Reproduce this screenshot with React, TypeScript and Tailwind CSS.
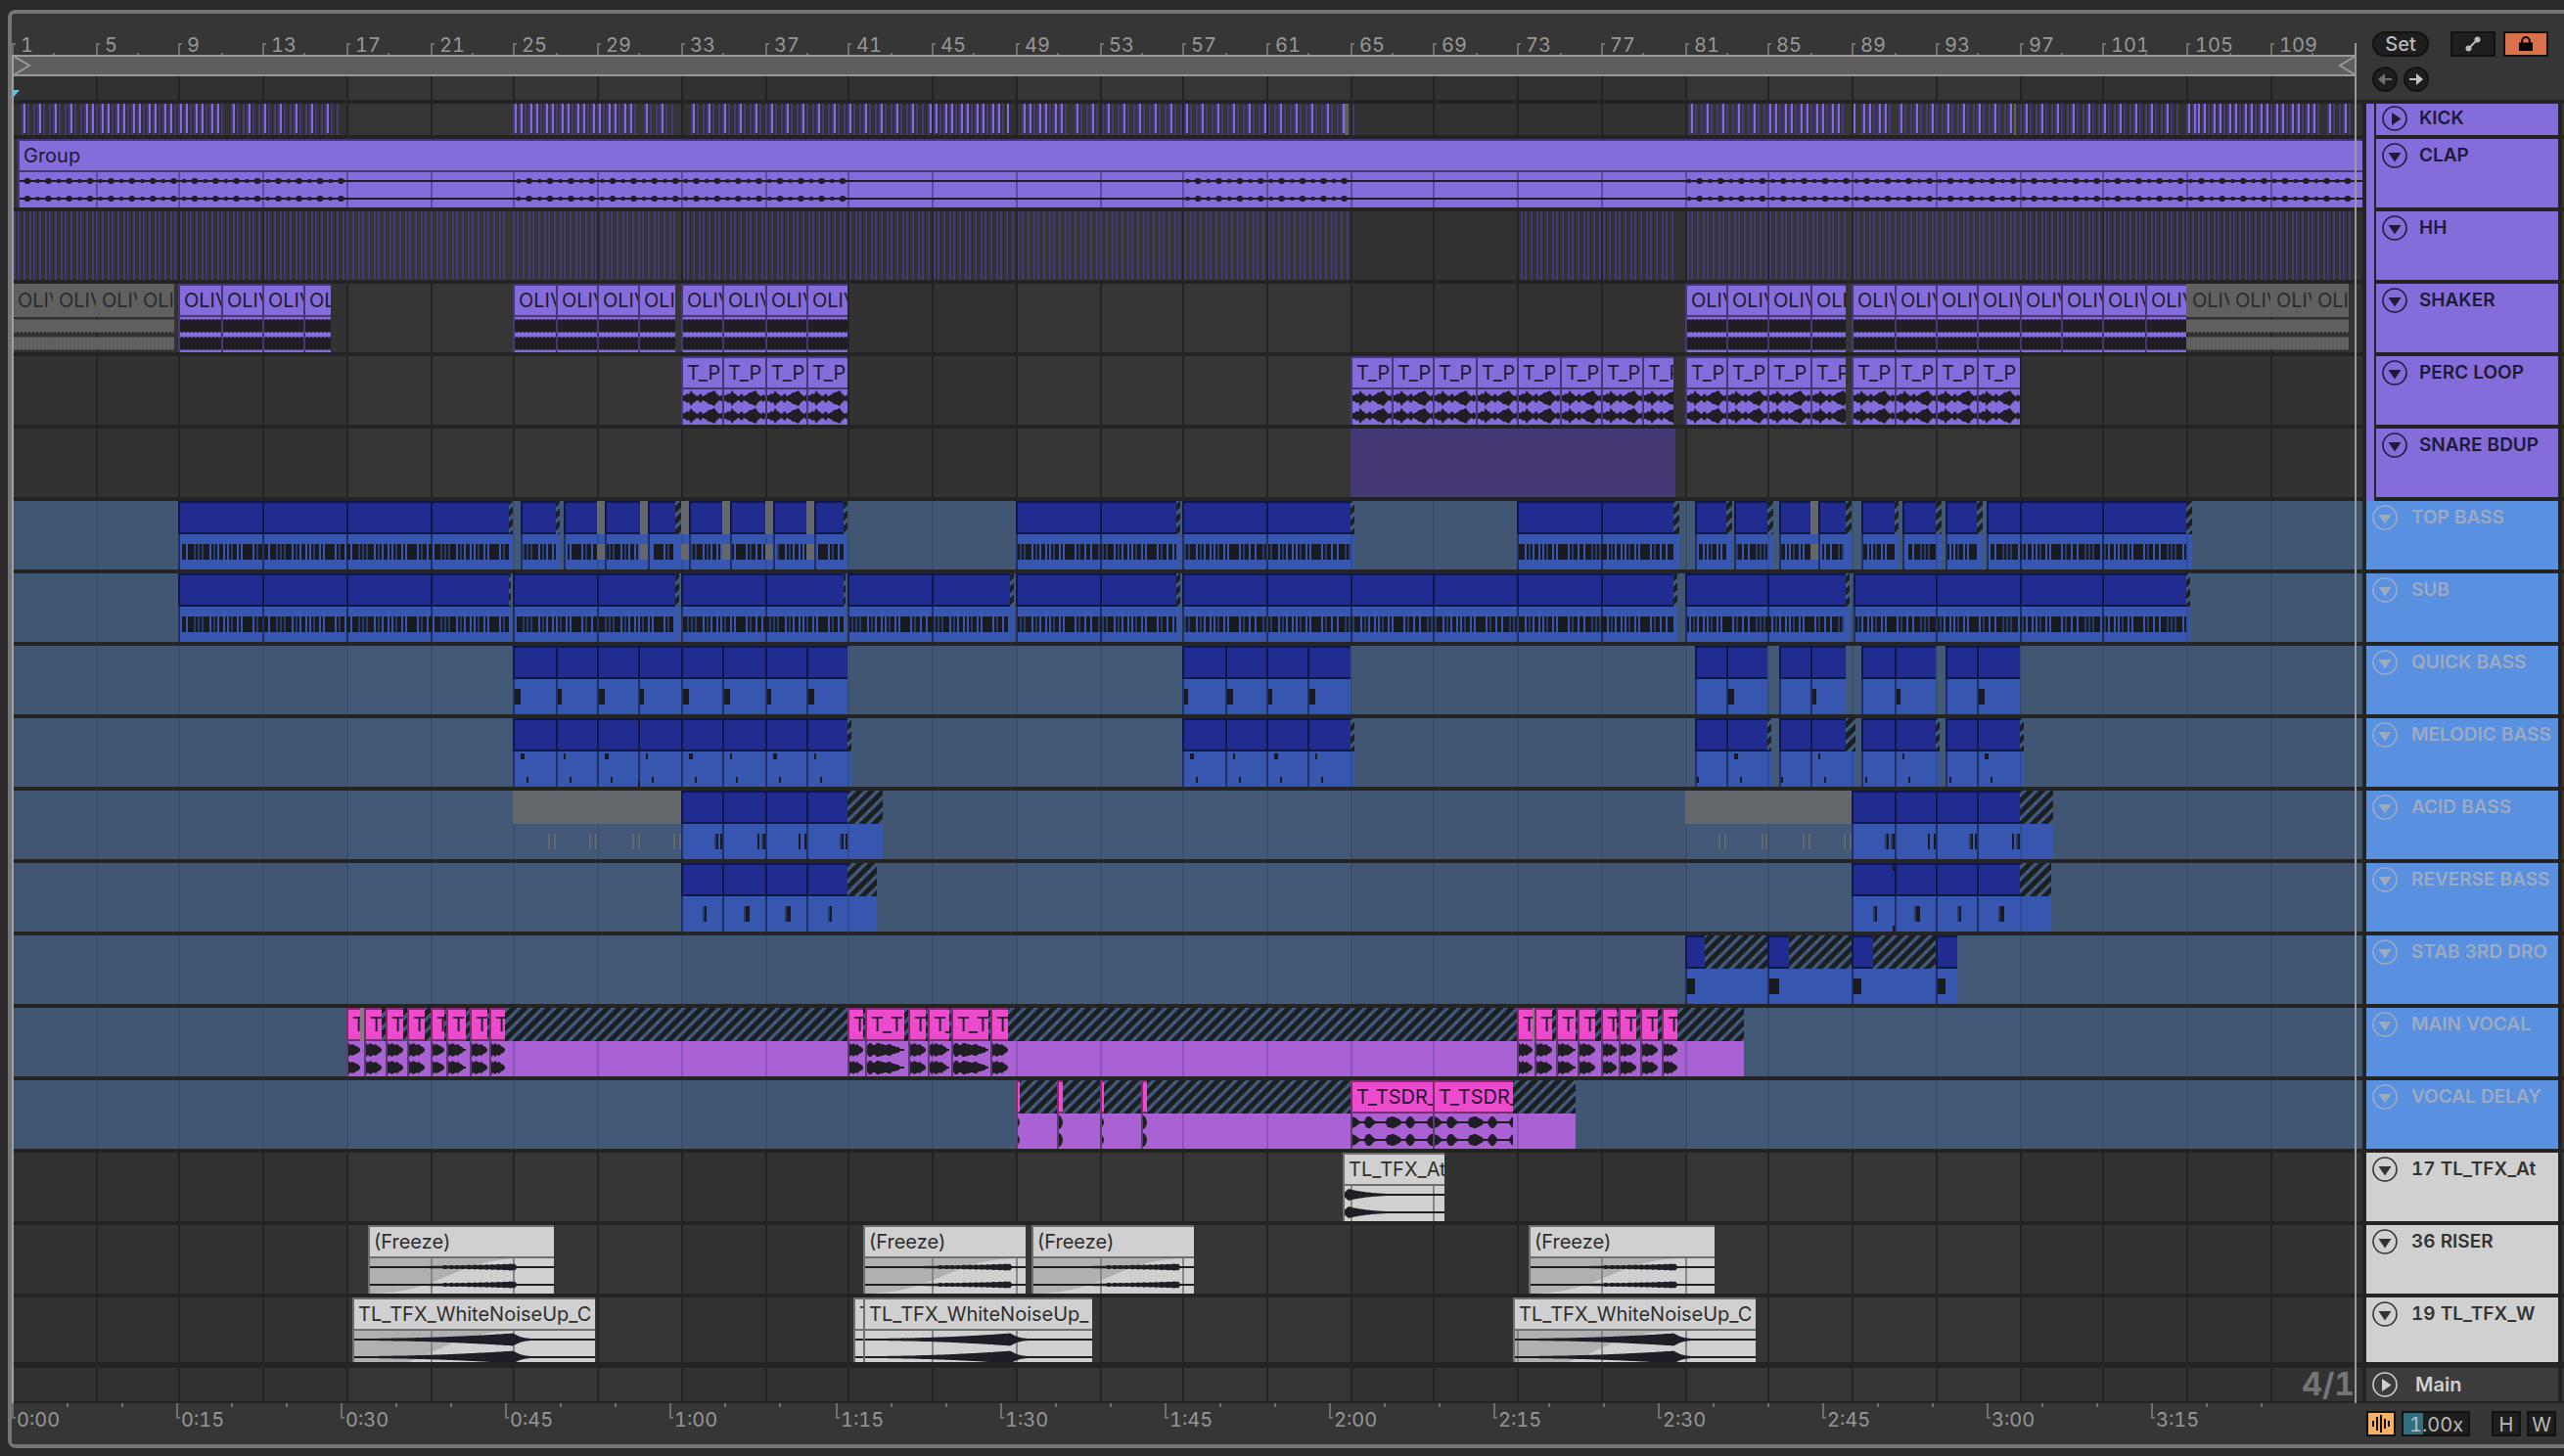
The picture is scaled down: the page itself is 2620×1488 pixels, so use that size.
import { clsx } from 'clsx';

type Theme = 'purple' | 'blue' | 'vocal' | 'white' | 'off';
type WaveKind = 'clap' | 'shaker' | 'perc' | 'vocal' | 'delay' | 'riser' | 'noise' | 'tail';

interface Clip {
  from: number;
  to: number;
  label?: string;
  off?: boolean;
  wave?: WaveKind;
  peak?: number;
}

// x, y, width, height of a note inside the lane
type Note = [number, number, number, number];

interface Track {
  name: string;
  theme: Theme;
  group?: boolean;
  folded?: boolean;
  short?: boolean;
  parts?: [number, number][];
  clips?: Clip[];
  notes?: Note[];
  dimNotes?: Note[];
  offNotes?: Note[];
  stripes?: 'kick' | 'hh';
  block?: [number, number];
}

const BAR_GROUPS = Array.from({ length: 28 }, (_, i) => 1 + i * 4);

// timeline position of a bar
const px = (bar: number) => 2 * Math.ceil(5.4 + (42.74 * (bar - 1)) / 4);

// n two-bar clips starting at a bar, the last one can be cut earlier
const pairs = (bar: number, n: number, end?: number, extra: Partial<Clip> = {}): Clip[] =>
  Array.from({ length: n }, (_, k) => ({
    from: px(bar + k * 2),
    to: k === n - 1 && end ? end : px(bar + k * 2 + 2),
    ...extra,
  }));

const list = (...edges: [number, number][]): Clip[] => edges.map(([from, to]) => ({ from, to }));
const off = (...edges: [number, number][]): Clip[] => edges.map(([from, to]) => ({ from, to, off: true }));

/* ---------- kick and hi-hat stripes ---------- */

const seq = (from: number, to: number, step: number) => {
  const out: number[] = [];
  for (let x = from; x <= to; x += step) out.push(Math.round(x / 2) * 2);
  return out;
};

const KICK_SINGLE = [
  ...seq(24, 74, 16.1),
  ...seq(238, 336, 16),
  ...seq(660, 678, 16),
  ...seq(708, 934, 16.04),
  ...seq(1099, 1196, 16),
  ...seq(1211, 1372, 16),
  ...seq(1728, 1793, 16),
  ...seq(1942, 2214, 16),
  ...seq(2380, 2396, 16),
];
const KICK_DOUBLE = [
  ...seq(88, 170, 16),
  ...seq(184, 218, 16),
  ...seq(526, 646, 16),
  ...seq(949, 1014, 16),
  ...seq(1045, 1078, 16),
  ...seq(1808, 1872, 16),
  1904,
  1920,
  2236,
  ...seq(2246, 2358, 16),
];
const KICK_BRIGHT = [...KICK_SINGLE, ...KICK_DOUBLE.flatMap((x) => [x, x + 6]), 1029, 1894];
const KICK_DARK = [...KICK_SINGLE, ...KICK_DOUBLE].flatMap((x) => [x - 2, x + 4, x + 10]);

const HH_RANGES = [
  [14, 518],
  [524, 690],
  [698, 1034],
  [1040, 1378],
  [1554, 1710],
  [1724, 1884],
  [1894, 2400],
];
const HH_LINES = HH_RANGES.flatMap(([a, b]) =>
  seq(a, b, 16)
    .flatMap((x) => [x, x + 4, x + 10])
    .filter((x) => x <= b),
);

const bars = (xs: number[], y: number, h: number) => xs.map((x) => `M${x} ${y}h2v${h}h-2z`).join('');

/* ---------- midi notes ---------- */

const BASS_PATTERN = '###.#d##.##.###d#d#d###.#d#.##.#.#d##.#.##';

const bassNotes = (ranges: [number, number][], mark: string): Note[] =>
  ranges.flatMap(([a, b]) => {
    const out: Note[] = [];
    for (let x = a + 2; x < b; x += 2) {
      if (BASS_PATTERN[(x / 2) % BASS_PATTERN.length] === mark) out.push([x, 44, 2, 16]);
    }
    return out;
  });

const notePath = (notes: Note[]) => notes.map(([x, y, w, h]) => `M${x} ${y}h${w}v${h}h${-w}z`).join('');

/* ---------- waveforms ---------- */

const PERC = [2, 3, 3, 5, 4, 8, 5, 4, 2, 3, 5, 2, 3, 4, 6, 6, 7, 8, 5, 3, 2, 4];
const VOCAL = [4, 7, 5, 7, 6, 5, 6, 4, 3, 1];
const DELAY = [6, 6, 5, 4, 2, 1, 1, 1, 5, 6, 6, 4, 2, 1, 1, 1, 1, 1, 1, 5, 5, 6, 6, 5, 4, 3, 1, 1, 1, 4, 6, 6, 4, 1, 1, 1, 1, 1, 1, 1, 4, 6];

const clapActive = (x: number) =>
  (x > 22 && x < 352) || (x > 524 && x < 866) || (x > 1208 && x < 1380) || (x > 1722 && x < 2406);

function amplitude(kind: WaveKind, x: number, width: number, start: number, peak: number) {
  switch (kind) {
    case 'clap': {
      const gx = x + start;
      if (!clapActive(gx)) return 1;
      const n = Math.round((gx - 28) / 10.68);
      const d = Math.abs(gx - 28 - n * 10.68);
      const r = n % 2 === 0 ? 3.4 : 2.4;
      return d < r ? Math.max(1, Math.sqrt(r * r - d * d) * 0.9) : 1;
    }
    case 'shaker':
      return x % 4 < 2 ? 7 : 6;
    case 'perc':
      return PERC[Math.floor(x / 2) % PERC.length];
    case 'vocal':
      return VOCAL[Math.min(VOCAL.length - 1, Math.floor((x / width) * VOCAL.length))];
    case 'delay':
      return DELAY[Math.floor(x / 2) % DELAY.length];
    case 'riser':
      return x < peak ? 1 + 2 * Math.pow(x / peak, 3) + (x > peak * 0.5 && x % 6 < 3 ? 0.6 : 0) : 1;
    case 'noise':
      return x < peak ? 1 + 5.5 * Math.pow(x / peak, 2) : Math.max(1, 5.5 * Math.exp((peak - x) / 9));
    default:
      return x < 6 ? 1 + x * 0.8 : Math.max(1, 6 * Math.exp((6 - x) / 22));
  }
}

function wavePath({ wave, from, to, peak = 151 }: Clip, mid: number) {
  const width = to - from;
  const step = wave === 'clap' ? 1 : 2;
  const top: string[] = [];
  const bottom: string[] = [];
  for (let x = 0; x <= width; x += step) {
    const a = amplitude(wave!, x, width, from, peak);
    top.push(`${x} ${(mid - a).toFixed(1)}`);
    bottom.unshift(`${x} ${(mid + a).toFixed(1)}`);
  }
  return `M${top.join('L')}L${bottom.join('L')}Z`;
}

/* ---------- arrangement ---------- */

const OLIV = { label: 'OLIV', wave: 'shaker' as const };
const PERC_CLIP = { label: 'T_P', wave: 'perc' as const };

const vocalLabel = (width: number) => (width > 30 ? 'T_T' : width > 20 ? 'T_' : width > 8 ? 'T' : undefined);
const vocal = (...edges: [number, number][]): Clip[] =>
  edges.map(([from, to]) => ({ from, to, label: vocalLabel(to - from), wave: 'vocal' }));

const QUICK_RIGHT: [number, number][] = [
  [1732, 1764],
  [1764, 1806],
  [1818, 1850],
  [1850, 1886],
  [1902, 1936],
  [1936, 1978],
  [1988, 2020],
  [2020, 2064],
];

const TOP_PARTS: [number, number][] = [
  [182, 524],
  [532, 572],
  [576, 866],
  [1038, 1206],
  [1208, 1384],
  [1550, 1716],
  [1732, 1770],
  [1772, 1812],
  [1818, 1892],
  [1902, 1940],
  [1944, 1984],
  [1988, 2026],
  [2030, 2240],
];

const TOP_NOTES: [number, number][] = [
  [182, 520],
  [532, 568],
  [578, 610],
  [618, 654],
  [664, 688],
  [704, 738],
  [746, 782],
  [792, 824],
  [832, 862],
  [1038, 1202],
  [1208, 1380],
  [1550, 1710],
  [1732, 1764],
  [1772, 1806],
  [1818, 1850],
  [1860, 1884],
  [1902, 1936],
  [1946, 1978],
  [1988, 2020],
  [2032, 2234],
];

const SUB_NOTES: [number, number][] = [
  [182, 520],
  [524, 688],
  [696, 862],
  [866, 1030],
  [1038, 1202],
  [1208, 1710],
  [1722, 1884],
  [1894, 2234],
];

const tracks: Track[] = [
  { name: 'KICK', theme: 'purple', group: true, folded: true, stripes: 'kick' },
  {
    name: 'CLAP',
    theme: 'purple',
    group: true,
    clips: [{ from: 18, to: 2440, label: 'Group', wave: 'clap' }],
  },
  { name: 'HH', theme: 'purple', group: true, stripes: 'hh' },
  {
    name: 'SHAKER',
    theme: 'purple',
    group: true,
    clips: [
      ...pairs(1, 4, 178, { ...OLIV, off: true }),
      ...pairs(9, 4, 338, OLIV),
      ...pairs(25, 4, 690, OLIV),
      ...pairs(33, 4, 866, OLIV),
      ...pairs(81, 4, 1886, OLIV),
      ...pairs(89, 8, 2234, OLIV),
      ...pairs(105, 4, 2400, { ...OLIV, off: true }),
    ],
  },
  {
    name: 'PERC LOOP',
    theme: 'purple',
    group: true,
    clips: [
      ...pairs(33, 4, 866, PERC_CLIP),
      ...pairs(65, 8, 1710, PERC_CLIP),
      ...pairs(81, 4, 1886, PERC_CLIP),
      ...pairs(89, 4, 2064, PERC_CLIP),
    ],
  },
  { name: 'SNARE BDUP', theme: 'purple', group: true, block: [1380, 1712] },
  {
    name: 'TOP BASS',
    theme: 'blue',
    parts: TOP_PARTS,
    clips: [
      ...list([182, 268], [268, 354], [354, 440], [440, 520], [532, 568], [576, 610], [618, 654], [662, 690]),
      ...list([704, 738], [746, 782], [790, 824], [832, 862], [1038, 1124], [1124, 1202], [1208, 1294], [1294, 1380]),
      ...list([1550, 1636], [1636, 1710], [1732, 1764], [1772, 1806], [1818, 1850], [1858, 1886], [1902, 1936]),
      ...list([1944, 1978], [1988, 2020], [2030, 2064], [2064, 2148], [2148, 2234]),
      ...off([610, 618], [654, 662], [696, 704], [738, 746], [782, 790], [824, 832], [1850, 1858]),
    ],
    notes: bassNotes(TOP_NOTES, '#'),
    dimNotes: bassNotes(TOP_NOTES, 'd'),
    offNotes: [610, 654, 696, 738, 782, 824, 1850].map((x) => [x, 44, 8, 16]),
  },
  {
    name: 'SUB',
    theme: 'blue',
    parts: [
      [182, 522],
      [524, 694],
      [696, 864],
      [866, 1036],
      [1038, 1206],
      [1208, 1714],
      [1722, 1890],
      [1894, 2238],
    ],
    clips: [
      ...list([182, 268], [268, 354], [354, 440], [440, 520], [524, 610], [610, 690], [696, 782], [782, 862]),
      ...list([866, 952], [952, 1032], [1038, 1124], [1124, 1202], [1208, 1294], [1294, 1380], [1380, 1464]),
      ...list([1464, 1550], [1550, 1636], [1636, 1710], [1722, 1806], [1806, 1886], [1894, 1978], [1978, 2064]),
      ...list([2064, 2148], [2148, 2234]),
    ],
    notes: bassNotes(SUB_NOTES, '#'),
    dimNotes: bassNotes(SUB_NOTES, 'd'),
  },
  {
    name: 'QUICK BASS',
    theme: 'blue',
    parts: [
      [524, 866],
      [1208, 1380],
      [1732, 1806],
      [1818, 1886],
      [1902, 1978],
      [1988, 2064],
    ],
    clips: [...pairs(25, 8), ...pairs(57, 4), ...list(...QUICK_RIGHT)],
    notes: [
      ...pairs(25, 8).map((c, i): Note => [c.from + 2, 44, [6, 4, 6, 4, 6, 6, 4, 6][i], 16]),
      ...pairs(57, 4).map((c, i): Note => [c.from + 2, 44, [4, 6, 4, 6][i], 16]),
      [1766, 44, 6, 16],
      [1852, 44, 4, 16],
      [1938, 44, 4, 16],
      [2022, 44, 6, 16],
    ],
  },
  {
    name: 'MELODIC BASS',
    theme: 'blue',
    parts: [
      [524, 870],
      [1208, 1384],
      [1732, 1810],
      [1818, 1896],
      [1902, 1982],
      [1988, 2068],
    ],
    clips: [...pairs(25, 8), ...pairs(57, 4), ...list(...QUICK_RIGHT)],
    notes: [
      ...[...pairs(25, 8), ...pairs(57, 4)].flatMap((c, i): Note[] => [
        [c.from + 8, 36, i % 2 ? 2 : 4, 6],
        [c.from + 14, 60, 2, 6],
      ]),
      ...[1764, 1850, 1936, 2020].flatMap((x): Note[] => [
        [x + 8, 36, x === 1764 || x === 2020 ? 4 : 2, 6],
        [x + 14, 60, 2, 6],
      ]),
      ...[1734, 1820, 1906, 1992].map((x): Note => [x, 60, 2, 6]),
      [652, 2, 2, 6],
      [652, 64, 2, 6],
    ],
  },
  {
    name: 'ACID BASS',
    theme: 'blue',
    parts: [
      [696, 902],
      [1892, 2098],
    ],
    clips: [
      { from: 524, to: 696, off: true },
      ...pairs(33, 4),
      { from: 1722, to: 1892, off: true },
      ...pairs(89, 4),
    ],
    notes: [732, 736, 774, 780, 816, 822, 860, 864, 1928, 1934, 1970, 1976, 2014, 2018, 2056, 2062].map(
      (x) => [x, 44, 2, 16],
    ),
    dimNotes: [730, 778, 858, 1926, 1932, 2012, 2060].map((x) => [x, 44, 2, 16]),
    offNotes: [560, 566, 602, 608, 646, 652, 688, 694, 1756, 1762, 1800, 1804, 1842, 1848, 1884, 1890].map(
      (x) => [x, 44, 2, 16],
    ),
  },
  {
    name: 'REVERSE BASS',
    theme: 'blue',
    parts: [
      [696, 896],
      [1892, 2096],
    ],
    clips: [...pairs(33, 4), ...pairs(89, 4)],
    notes: [
      [720, 44, 2, 16],
      [762, 44, 4, 16],
      [804, 44, 4, 16],
      [848, 44, 2, 16],
      [1916, 44, 2, 16],
      [1958, 44, 4, 16],
      [2002, 44, 2, 16],
      [2044, 44, 4, 16],
      [1934, 2, 2, 6],
      [1934, 64, 2, 6],
    ],
    dimNotes: [718, 760, 802, 846, 1914, 1956, 2000, 2042].map((x) => [x, 44, 2, 16]),
  },
  {
    name: 'STAB 3RD DRO',
    theme: 'blue',
    parts: [
      [1722, 1806],
      [1806, 1892],
      [1892, 1978],
      [1978, 2000],
    ],
    clips: list([1722, 1742], [1806, 1828], [1892, 1914], [1978, 2000]),
    notes: [
      [1724, 44, 8, 16],
      [1808, 44, 10, 16],
      [1894, 44, 8, 16],
      [1980, 44, 8, 16],
    ],
  },
  {
    name: 'MAIN VOCAL',
    theme: 'vocal',
    parts: [[354, 1782]],
    clips: [
      ...vocal([354, 368], [372, 390], [394, 412], [416, 434], [440, 454], [456, 476], [480, 498], [500, 516]),
      ...vocal([866, 882], [884, 924], [928, 946], [948, 970], [972, 1010], [1012, 1030]),
      ...vocal([1550, 1566], [1568, 1586], [1590, 1610], [1612, 1630], [1636, 1652], [1654, 1672]),
      ...vocal([1676, 1694], [1698, 1714]),
      ...off([368, 372], [1566, 1568]),
    ],
  },
  {
    name: 'VOCAL DELAY',
    theme: 'vocal',
    parts: [[1038, 1610]],
    clips: [
      ...vocal([1038, 1042], [1080, 1086], [1124, 1128], [1166, 1172]),
      { from: 1380, to: 1464, label: 'T_TSDR_', wave: 'delay' },
      { from: 1464, to: 1546, label: 'T_TSDR_', wave: 'delay' },
    ],
  },
  {
    name: '17 TL_TFX_At',
    theme: 'white',
    clips: [{ from: 1372, to: 1476, label: 'TL_TFX_At', wave: 'tail' }],
  },
  {
    name: '36 RISER',
    theme: 'white',
    clips: [
      { from: 376, to: 566, label: '(Freeze)', wave: 'riser' },
      { from: 882, to: 1048, label: '(Freeze)', wave: 'riser' },
      { from: 1054, to: 1220, label: '(Freeze)', wave: 'riser' },
      { from: 1562, to: 1752, label: '(Freeze)', wave: 'riser' },
    ],
  },
  {
    name: '19 TL_TFX_W',
    theme: 'white',
    short: true,
    clips: [
      { from: 360, to: 608, label: 'TL_TFX_WhiteNoiseUp_C', wave: 'noise', peak: 166 },
      { from: 872, to: 882, label: 'T', wave: 'noise', peak: 162 },
      { from: 882, to: 1116, label: 'TL_TFX_WhiteNoiseUp_', wave: 'noise', peak: 152 },
      { from: 1546, to: 1794, label: 'TL_TFX_WhiteNoiseUp_C', wave: 'noise', peak: 166 },
    ],
  },
];

const titleStyles: Record<Theme, string> = {
  purple: 'border-[#453875] bg-[#846ddb] text-[#1f1a2e]',
  blue: 'border-[#10184a] bg-[#202c90] text-[#0a0e24]',
  vocal: 'border-[#822a70] bg-[#ec4bce] text-[#2c1430]',
  white: 'border-[#6f6f6f] bg-[#d0d0d0] text-[#2e2e2e]',
  off: 'border-transparent bg-[#606060] text-[#2b2b2b]',
};

const bodyStyles: Record<Theme, string> = {
  purple: 'bg-[#846ddb]',
  blue: 'bg-[#3656b0]',
  vocal: 'bg-[#a961d4]',
  white: 'bg-[#d0d0d0]',
  off: '',
};

const bodyEdge: Record<Theme, string> = {
  purple: 'bg-[#453875]',
  blue: 'bg-[#1e2e68]',
  vocal: 'bg-[#5c3a75]',
  white: 'bg-[#6f6f6f]',
  off: '',
};

const bodyLine: Record<Theme, string> = {
  purple: 'bg-[#5d4c9f]',
  blue: 'bg-[#2f4e96]',
  vocal: 'bg-[#8a55b4]',
  white: 'bg-[#868686]',
  off: 'bg-transparent',
};

const headStyles: Record<Theme, string> = {
  purple: 'bg-[#846ddb] text-[#1f1a3a]',
  blue: 'bg-[#5a90e0] text-[#9cabc2]',
  vocal: 'bg-[#5a90e0] text-[#9cabc2]',
  white: 'bg-[#d0d0d0] text-[#333333]',
  off: '',
};

/* ---------- lanes ---------- */

function Grid({ tinted }: { tinted?: boolean }) {
  return (
    <>
      {[17, 49, 81].map((bar) => (
        <div
          key={bar}
          className={clsx('absolute inset-y-0', tinted ? 'bg-[#435978]' : 'bg-[#363636]')}
          style={{ left: px(bar), width: px(bar + 16) - px(bar) }}
        />
      ))}
      {BAR_GROUPS.slice(1).map((bar) => (
        <div
          key={bar}
          className={clsx('absolute inset-y-0 w-0.5', tinted ? 'bg-[#3a506f]' : 'bg-[#242424]')}
          style={{ left: px(bar) }}
        />
      ))}
    </>
  );
}

function Body({ from, to, theme }: { from: number; to: number; theme: Theme }) {
  return (
    <div
      className={clsx('absolute top-[34px] bottom-0 overflow-hidden', bodyStyles[theme])}
      style={{ left: from, width: to - from }}
    >
      {BAR_GROUPS.filter((bar) => px(bar) >= from && px(bar) < to).map((bar) => (
        <div key={bar} className={clsx('absolute inset-y-0 w-0.5', bodyLine[theme])} style={{ left: px(bar) - from }} />
      ))}
    </div>
  );
}

function Fade({ clip }: { clip: Clip }) {
  const p = clip.peak ?? 156;
  const s = clip.wave === 'noise' ? 30 : 6;
  return <path d={`M0 0V36H${s}C${p * 0.5} 34 ${p * 0.55} 2 ${p} 0Z`} className="fill-[#b0b0b0]" />;
}

function ClipView({ clip, theme }: { clip: Clip; theme: Theme }) {
  const t = clip.off ? 'off' : theme;
  const width = clip.to - clip.from;
  const faded = clip.wave === 'riser' || (clip.wave === 'noise' && clip.peak === 166);

  return (
    <div className="absolute inset-y-0 overflow-hidden" style={{ left: clip.from, width }}>
      <div
        className={clsx(
          'h-[34px] overflow-hidden border-y-2 border-l-2 pl-1 text-xl leading-[30px] whitespace-nowrap',
          titleStyles[t],
          clip.off && theme === 'blue' && 'bg-[#64676b]!',
          clip.off && theme === 'vocal' && 'bg-[#808080]!',
        )}
      >
        {clip.label}
      </div>
      {clip.wave && (
        <svg width={width} height={36} className="absolute top-[34px] left-0">
          {faded && <Fade clip={clip} />}
          {faded &&
            BAR_GROUPS.filter((bar) => px(bar) > clip.from && px(bar) < clip.to).map((bar) => (
              <rect key={bar} x={px(bar) - clip.from} y={0} width={2} height={36} className="fill-[#868686]" />
            ))}
          <path
            d={wavePath(clip, 9) + wavePath(clip, 27)}
            className={clip.off ? 'fill-[#606060]' : 'fill-[#211d24]'}
          />
        </svg>
      )}
      {!clip.off && <div className={clsx('absolute top-[34px] bottom-0 left-0 w-0.5', bodyEdge[t])} />}
    </div>
  );
}

function Lane({ track }: { track: Track }) {
  const tinted = track.theme === 'blue' || track.theme === 'vocal';
  const parts = track.parts ?? track.clips?.filter((c) => !c.off).map((c): [number, number] => [c.from, c.to]) ?? [];

  return (
    <div className={clsx('relative min-w-0 flex-1 overflow-hidden', tinted ? 'bg-[#405673]' : 'bg-[#323232]')}>
      <div className="absolute inset-y-0 right-0 -left-3">
        <Grid tinted={tinted} />
        {parts.map(([from, to]) => (
          <div key={from}>
            {track.parts && (
              <div
                className="absolute top-0 h-[34px] bg-[linear-gradient(135deg,#1d1f21_0_25%,#405673_29%_46%,#1d1f21_50%_75%,#405673_79%_96%,#1d1f21)] bg-size-[12px_12px]"
                style={{ left: from, width: to - from }}
              />
            )}
            <Body from={from} to={to} theme={track.theme} />
          </div>
        ))}
        {track.block && (
          <div
            className="absolute inset-y-0 bg-[#453875]"
            style={{ left: track.block[0], width: track.block[1] - track.block[0] }}
          />
        )}
        {track.clips?.map((clip) => (
          <ClipView key={clip.from} clip={clip} theme={track.theme} />
        ))}
        {(track.notes || track.stripes) && (
          <svg className="absolute inset-0 h-full w-full" shapeRendering="crispEdges">
            {track.stripes === 'hh' && <path d={bars(HH_LINES, 0, 70)} className="fill-[#453875]" />}
            {track.stripes === 'kick' && (
              <>
                <path d={bars(KICK_DARK, 0, 32)} className="fill-[#453875]" />
                <path d={bars(KICK_BRIGHT, 0, 30)} className="fill-[#846ddb]" />
                <path d="M1374 0h4v32h-4zM2058 0h2v32h-2z" className="fill-[#606060]" />
              </>
            )}
            {track.offNotes && <path d={notePath(track.offNotes)} className="fill-[#64676b]" />}
            {track.dimNotes && <path d={notePath(track.dimNotes)} className="fill-[#263a6c]" />}
            {track.notes && <path d={notePath(track.notes)} className="fill-[#1a1b20]" />}
          </svg>
        )}
      </div>
    </div>
  );
}

function FoldButton({ name, folded }: { name: string; folded?: boolean }) {
  return (
    <button type="button" aria-label={`Fold ${name}`} className="size-[26px] shrink-0">
      <svg viewBox="0 0 26 26" className="size-full">
        <circle cx="13" cy="13" r="12" fill="none" stroke="currentColor" strokeWidth="1.6" />
        <path d={folded ? 'M10 7v13l9.500-6.500z' : 'M6.500 10h13l-6.500 9.500z'} fill="currentColor" />
      </svg>
    </button>
  );
}

function TrackHeader({ track }: { track: Track }) {
  return (
    <div className="flex w-[206px] shrink-0 pl-1">
      {track.group && <div className="-mb-1 w-2 shrink-0 bg-[#846ddb]" />}
      <div
        className={clsx(
          'flex min-w-0 flex-1 items-start overflow-hidden pl-1.5',
          track.group ? 'ml-0.5 gap-3' : 'gap-3.5',
          track.folded ? 'pt-0.5' : 'pt-1',
          headStyles[track.theme],
        )}
      >
        <FoldButton name={track.name} folded={track.folded} />
        <span className="text-[19px] leading-[26px] font-semibold tabular-nums whitespace-nowrap">{track.name}</span>
      </div>
      <div className="ml-1 w-0.5 bg-[#363636]" />
    </div>
  );
}

/* ---------- rulers and toolbar ---------- */

function BarRuler() {
  return (
    <div className="relative h-[42px] overflow-hidden">
      <div className="absolute inset-y-0 right-0 -left-3">
        {BAR_GROUPS.map((bar) => (
          <div key={bar}>
            <div
              className="absolute bottom-0 h-3 w-1 border-t-2 border-l-2 border-[#6e6e6e]"
              style={{ left: px(bar) }}
            />
            <div className="absolute bottom-0 h-0.5 w-0.5 bg-[#6e6e6e]" style={{ left: px(bar + 2) }} />
            <span
              className="absolute top-5 text-xl leading-6 text-[#969696] tabular-nums"
              style={{ left: px(bar) + 9 }}
            >
              {bar}
            </span>
          </div>
        ))}
      </div>
    </div>
  );
}

const clock = (i: number) => `${Math.floor((i * 15) / 60)}:${String((i * 15) % 60).padStart(2, '0')}`;

function TimeRuler() {
  return (
    <div className="relative min-w-0 flex-1 overflow-hidden">
      <div className="absolute inset-y-0 right-0 -left-3">
        {Array.from({ length: 14 }, (_, i) => 12 + 2 * Math.round(i * 84.1)).map((x, i) => (
          <div key={x}>
            <div className="absolute top-0 h-4 w-1 border-b-2 border-l-2 border-[#6e6e6e]" style={{ left: x }} />
            <div className="absolute top-0 h-1 w-0.5 bg-[#6e6e6e]" style={{ left: x + 56 }} />
            <div className="absolute top-0 h-1 w-0.5 bg-[#6e6e6e]" style={{ left: x + 112 }} />
            <span
              className="absolute top-[5px] text-xl leading-6 text-[#969696] tabular-nums"
              style={{ left: x + 5 }}
            >
              {clock(i)}
            </span>
          </div>
        ))}
      </div>
    </div>
  );
}

function Toolbar() {
  const box = 'flex h-[26px] w-[46px] items-center justify-center border-2 border-[#121212]';
  const round = 'flex size-[26px] items-center justify-center rounded-full border-2 border-[#121212] bg-[#1e1e1e]';
  return (
    <div className="w-[206px] shrink-0 pt-[18px] pl-2.5">
      <div className="flex items-center">
        <button
          type="button"
          className="h-[26px] w-[58px] rounded-full border-2 border-[#121212] bg-[#1e1e1e] text-xl leading-[22px] font-medium text-[#b9b9b9]"
        >
          Set
        </button>
        <button type="button" aria-label="Automation mode" className={clsx(box, 'ml-[22px] bg-[#1e1e1e]')}>
          <svg width="16" height="16" viewBox="0 0 16 16" className="text-[#b9b9b9]">
            <path d="M3.500 12.500l9-9" stroke="currentColor" strokeWidth="2" />
            <circle cx="3.500" cy="12.500" r="3" fill="currentColor" />
            <circle cx="12.500" cy="3.500" r="3" fill="currentColor" />
          </svg>
        </button>
        <button type="button" aria-label="Lock envelopes" className={clsx(box, 'ml-2 bg-[#d9714d]')}>
          <svg width="14" height="16" viewBox="0 0 14 16">
            <path d="M3.200 7V4.800a3.800 3.800 0 017.600 0V7" fill="none" stroke="#080808" strokeWidth="2" />
            <path d="M0 6.500h14V15H0z" fill="#080808" />
          </svg>
        </button>
      </div>
      <div className="mt-2.5 flex gap-1.5">
        <button type="button" aria-label="Previous locator" className={clsx(round, 'text-[#6e6e6e]')}>
          <svg width="16" height="14" viewBox="0 0 16 14" fill="currentColor" className="shrink-0">
            <path d="M1 7l7-6v12zM8 6h7v2H8z" />
          </svg>
        </button>
        <button type="button" aria-label="Next locator" className={clsx(round, 'text-[#c4c4c4]')}>
          <svg width="16" height="14" viewBox="0 0 16 14" fill="currentColor" className="shrink-0">
            <path d="M15 7L8 1v12zM8 6H1v2h7z" />
          </svg>
        </button>
      </div>
    </div>
  );
}

function Footer() {
  const key = 'h-[26px] w-[30px] border-2 border-[#121212] bg-[#1e1e1e] text-xl leading-6 text-[#b9b9b9]';
  return (
    <div className="flex h-[42px] bg-[#363636]">
      <TimeRuler />
      <div className="flex w-[206px] shrink-0 pt-2 pl-1">
        <button
          type="button"
          aria-label="Waveform zoom"
          className="flex h-[26px] w-[30px] items-center justify-center border-2 border-[#121212] bg-[#f5b168]"
        >
          <svg width="18" height="18" viewBox="0 0 18 18" fill="#111">
            <path d="M0 6h2v6H0zM4 2h2v14H4zM8 0h2v18H8zM12 4h2v10h-2zM16 6h2v6h-2z" />
          </svg>
        </button>
        <input
          aria-label="Waveform height"
          defaultValue="1.00x"
          className="ml-1.5 h-[26px] w-[70px] border-2 border-[#121212] bg-[linear-gradient(90deg,#2f6f80_20px,#1e1e1e_20px)] pt-px pl-1.5 text-xl leading-[22px] text-[#b9b9b9] tabular-nums"
        />
        <button type="button" className={clsx(key, 'ml-[22px]')}>
          H
        </button>
        <button type="button" className={clsx(key, 'ml-1.5')}>
          W
        </button>
      </div>
    </div>
  );
}

export default function App() {
  return (
    <div className="min-h-screen overflow-hidden bg-[#2a2a2a] pt-2.5 pb-1.5 pl-2 font-['Inter','Liberation_Sans',sans-serif]">
      <div className="relative overflow-hidden rounded-l-lg border-y-4 border-l-4 border-[#757575] bg-[#242424]">
        {/* Rulers */}
        <div className="flex bg-[#363636]">
          <div className="min-w-0 flex-1 pr-1.5">
            <BarRuler />
            <div className="flex h-[22px] items-stretch justify-between border-y-2 border-[#999999] bg-[#5e5e5e]">
              <svg width="20" height="18" className="fill-none stroke-[#999999] stroke-2">
                <path d="M3 0l15 9L3 18" />
              </svg>
              <svg width="20" height="18" className="fill-none stroke-[#999999] stroke-2">
                <path d="M18 0L3 9l15 9" />
              </svg>
            </div>
            <div className="relative h-6 overflow-hidden bg-[#323232]">
              <div className="absolute inset-y-0 right-0 -left-3">
                <Grid />
              </div>
              <svg width="8" height="8" className="absolute bottom-0.5 left-0 fill-[#5ec6d8]">
                <path d="M0 0h8L2 7H0z" />
              </svg>
            </div>
          </div>
          <Toolbar />
        </div>

        {/* Tracks */}
        <div className="flex flex-col gap-1 py-1">
          {tracks.map((track) => (
            <div
              key={track.name}
              className={clsx('flex', track.folded ? 'h-8' : track.short ? 'h-[66px]' : 'h-[70px]')}
            >
              <Lane track={track} />
              <TrackHeader track={track} />
            </div>
          ))}
        </div>

        {/* Main */}
        <div className="flex h-[38px] pt-0.5 pb-0.5">
          <div className="relative min-w-0 flex-1 overflow-hidden bg-[#323232]">
            <div className="absolute inset-y-0 right-0 -left-3">
              <Grid />
            </div>
            <div className="absolute inset-y-0 right-2 text-[32px] leading-[34px] font-bold text-[#757575] tabular-nums">
              4/1
            </div>
          </div>
          <div className="flex w-[206px] shrink-0 pl-1">
            <div className="flex flex-1 items-center gap-[18px] bg-[#3c3c3c] pl-1.5 text-[#d0d0d0]">
              <FoldButton name="Main" folded />
              <span className="text-xl font-semibold">Main</span>
            </div>
            <div className="ml-1 w-0.5 bg-[#363636]" />
          </div>
        </div>

        <Footer />

        {/* Playhead and end marker */}
        <div className="absolute top-[42px] bottom-[42px] left-0 w-0.5 bg-[#a0a0a0]" />
        <div className="absolute top-[30px] right-[212px] bottom-[42px] w-0.5 bg-[#999999]" />
      </div>
    </div>
  );
}
